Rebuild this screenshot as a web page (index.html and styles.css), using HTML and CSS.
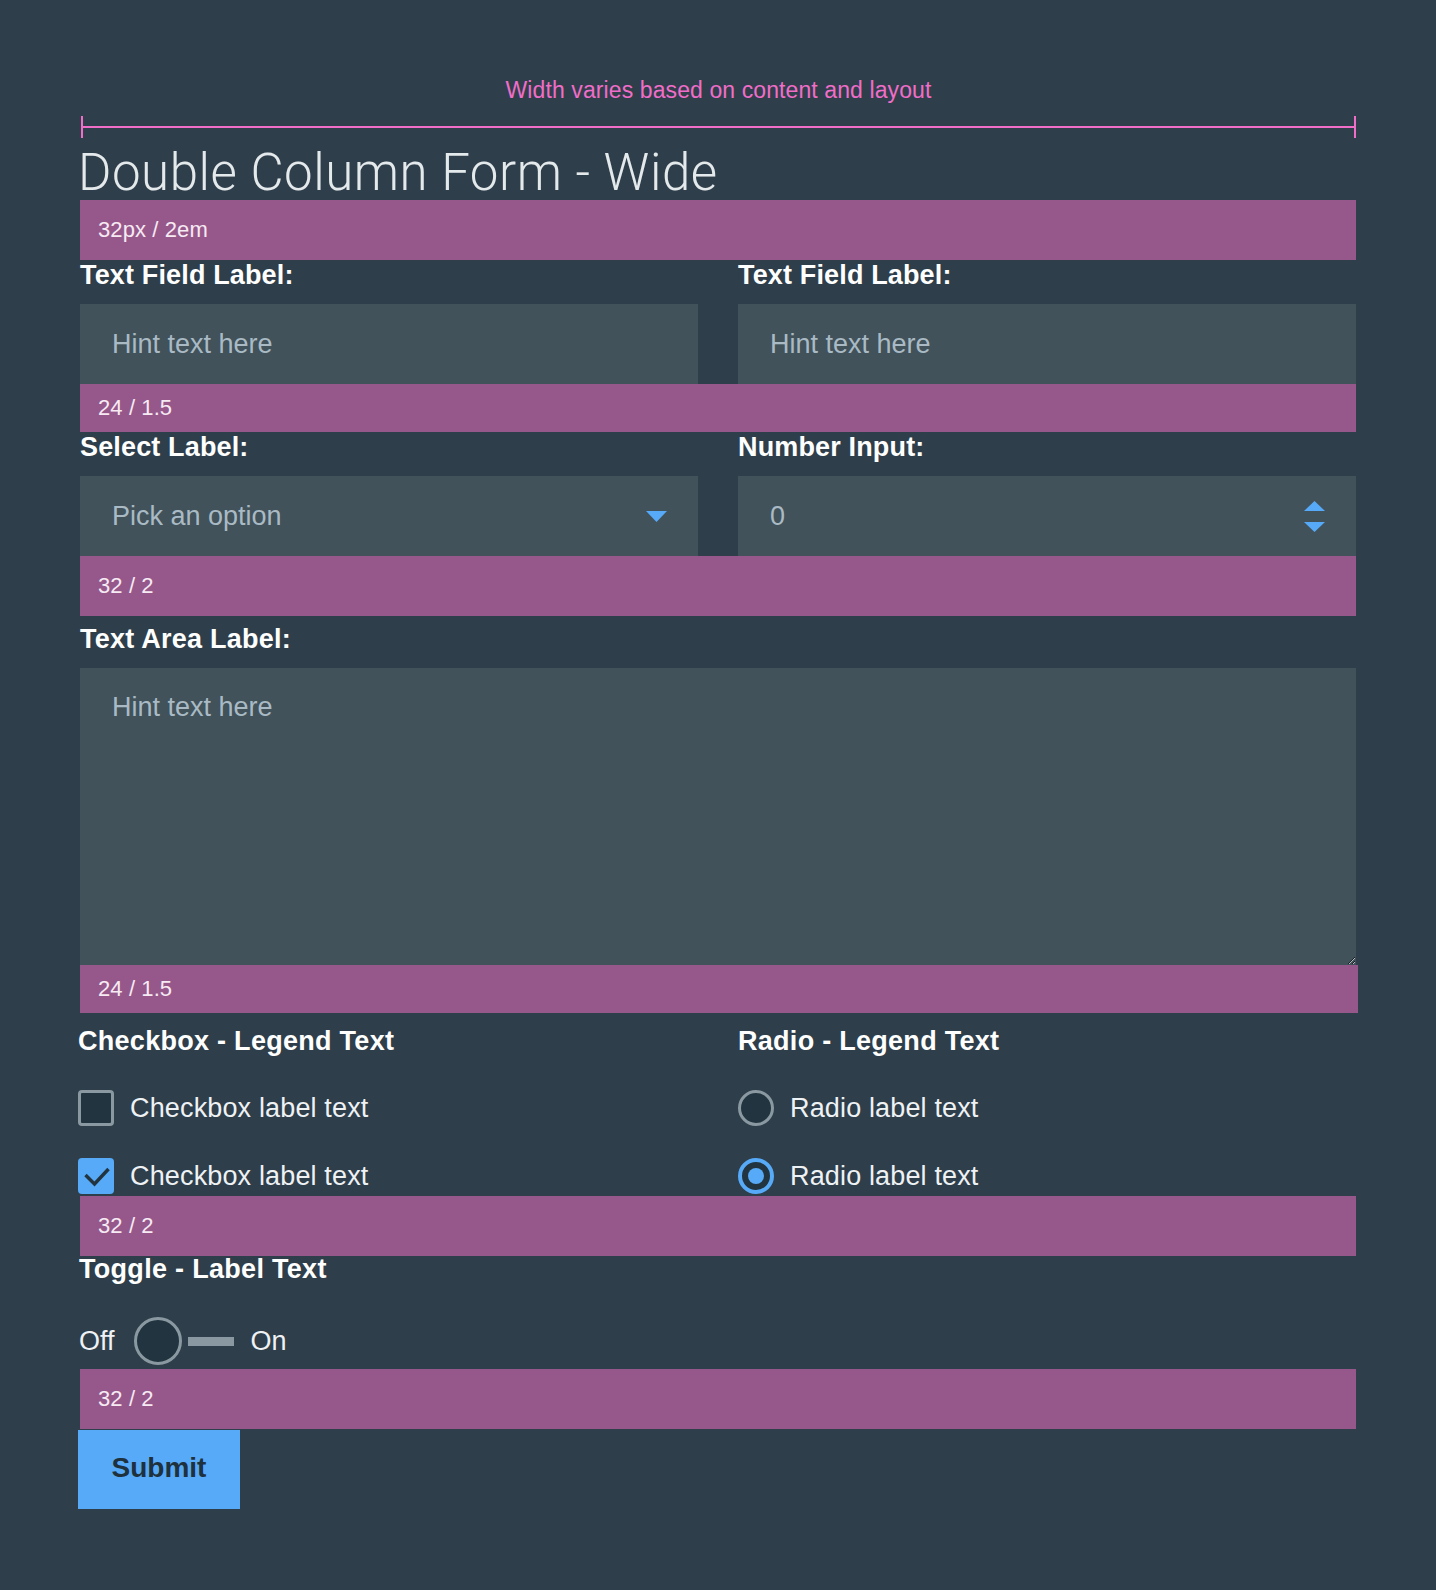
FILE: index.html
```html
<!DOCTYPE html>
<html lang="en">
<head>
<meta charset="utf-8">
<title>Double Column Form - Wide</title>
<link rel="stylesheet" href="styles.css">
</head>
<body>
<main class="page">
  <p class="caption">Width varies based on content and layout</p>
  <div class="ruler"><span class="tick"></span><span class="line"></span><span class="tick"></span></div>
  <h1 class="title">Double Column Form - Wide</h1>
  <div class="band band-tall">32px / 2em</div>

  <div class="row">
    <div class="field">
      <label class="label" for="t1">Text Field Label:</label>
      <input class="input" id="t1" type="text" placeholder="Hint text here">
    </div>
    <div class="field">
      <label class="label" for="t2">Text Field Label:</label>
      <input class="input" id="t2" type="text" placeholder="Hint text here">
    </div>
  </div>
  <div class="band band-short">24 / 1.5</div>

  <div class="row">
    <div class="field">
      <span class="label">Select Label:</span>
      <div class="control select">
        <span class="hint">Pick an option</span>
        <svg class="caret" width="21" height="11" viewBox="0 0 21 11"><polygon points="0,0 21,0 10.5,11" fill="#57aaf8"/></svg>
      </div>
    </div>
    <div class="field">
      <span class="label">Number Input:</span>
      <div class="control number">
        <span class="hint">0</span>
        <svg class="spin" width="21" height="31" viewBox="0 0 21 31"><polygon points="10.5,0 21,10 0,10" fill="#57aaf8"/><polygon points="0,21 21,21 10.5,31" fill="#57aaf8"/></svg>
      </div>
    </div>
  </div>
  <div class="band band-tall">32 / 2</div>

  <label class="label label-area" for="ta">Text Area Label:</label>
  <textarea class="textarea" id="ta" placeholder="Hint text here"></textarea>
  <div class="band band-short band-wide">24 / 1.5</div>

  <div class="row choices">
    <div class="group group-check" role="group">
      <p class="legend">Checkbox - Legend Text</p>
      <div class="option"><span class="box"></span><span class="opt-text">Checkbox label text</span></div>
      <div class="option"><span class="box box-on"><svg width="35" height="35" viewBox="0 0 35 35"><polyline points="6.5,16 15.5,25 29.5,10" fill="none" stroke="#22343f" stroke-width="3.4"/></svg></span><span class="opt-text">Checkbox label text</span></div>
    </div>
    <div class="group" role="radiogroup">
      <p class="legend">Radio - Legend Text</p>
      <div class="option"><span class="radio"></span><span class="opt-text">Radio label text</span></div>
      <div class="option"><span class="radio radio-on"><span class="dot"></span></span><span class="opt-text">Radio label text</span></div>
    </div>
  </div>
  <div class="band band-tall">32 / 2</div>

  <div class="toggle-group">
    <p class="legend legend-toggle">Toggle - Label Text</p>
    <div class="toggle">
      <span class="toggle-text">Off</span>
      <span class="knob"></span>
      <span class="track"></span>
      <span class="toggle-text toggle-on">On</span>
    </div>
  </div>
  <div class="band band-tall">32 / 2</div>

  <button class="submit" type="button">Submit</button>
</main>
</body>
</html>
```

FILE: styles.css
```css
* { box-sizing: border-box; }

html, body {
  margin: 0;
  padding: 0;
  background: #2e3e4a;
}

body {
  font-family: "Liberation Sans", Arial, sans-serif;
  color: #ffffff;
}

.page {
  padding: 76px 80px 81px 80px;
  min-height: 1590px;
}

.caption {
  margin: 0;
  font-size: 23px;
  line-height: 28px;
  letter-spacing: 0.1px;
  color: #f06dc8;
  text-align: center;
  padding-left: 1px;
}

.ruler {
  display: flex;
  align-items: center;
  height: 22px;
  margin-top: 12px;
  padding-left: 1px;
}

.tick {
  width: 2px;
  height: 22px;
  background: #f06dc8;
}

.line {
  flex: 1;
  height: 2px;
  background: #f06dc8;
}

.title {
  margin: 6px 0 -1px -2px;
  font-family: Roboto, "Liberation Sans", sans-serif;
  font-weight: 300;
  font-size: 51px;
  line-height: 57px;
  color: #e4e9ec;
  letter-spacing: 0.55px;
}

.band {
  display: flex;
  align-items: center;
  padding-left: 18px;
  background: #96588b;
  color: #f6eaf3;
  font-size: 22px;
  letter-spacing: 0.1px;
}

.band-tall { height: 60px; }
.band-short { height: 48px; }
.band-wide { margin-right: -2px; }

.row {
  display: grid;
  grid-template-columns: 1fr 1fr;
  column-gap: 40px;
}

.field {
  display: flex;
  flex-direction: column;
}

.label {
  display: block;
  margin: 0 0 13px 0;
  font-weight: bold;
  font-size: 27px;
  line-height: 31px;
  letter-spacing: 0.15px;
  color: #ffffff;
}

.label-area {
  margin-top: 8px;
  letter-spacing: 0.25px;
}

.input,
.control,
.textarea {
  display: block;
  width: 100%;
  border: 0;
  margin: 0;
  background: #41525b;
  font-family: "Liberation Sans", Arial, sans-serif;
  font-size: 27px;
  color: #a9bac4;
  outline: none;
}

.input {
  height: 80px;
  padding: 0 32px;
}

.input::placeholder,
.textarea::placeholder {
  color: #a9bac4;
  opacity: 1;
}

.control {
  height: 80px;
  display: flex;
  align-items: center;
  justify-content: space-between;
  padding: 0 31px 0 32px;
}

.hint { color: #a9bac4; }

.caret, .spin { display: block; }

.textarea {
  height: 297px;
  padding: 19px 32px 15px;
  line-height: 40px;
  resize: both;
}

.choices {
  margin-top: 13px;
  margin-bottom: 2px;
}

.group-check {
  margin-left: -2px;
}

.legend {
  margin: 0;
  font-weight: bold;
  font-size: 27px;
  line-height: 31px;
  letter-spacing: 0.28px;
  color: #ffffff;
}

.option {
  display: flex;
  align-items: center;
  height: 36px;
  margin-top: 32px;
}

.legend + .option {
  margin-top: 33px;
}

.opt-text {
  margin-left: 16px;
  font-size: 27px;
  letter-spacing: 0.15px;
  color: #eef2f5;
}

.box {
  width: 36px;
  height: 36px;
  border: 3px solid #8a99a1;
  border-radius: 4px;
  background: #22343f;
  display: flex;
  align-items: center;
  justify-content: center;
}

.box-on {
  border: 0;
  background: #57aaf8;
}

.box svg { display: block; }

.radio {
  width: 36px;
  height: 36px;
  border: 3px solid #8a99a1;
  border-radius: 50%;
  background: #22343f;
  display: flex;
  align-items: center;
  justify-content: center;
}

.radio-on {
  border: 4px solid #57aaf8;
}

.dot {
  width: 16px;
  height: 16px;
  border-radius: 50%;
  background: #57aaf8;
}

.legend-toggle {
  line-height: 27px;
  margin-left: -1px;
  letter-spacing: 0.3px;
}

.toggle {
  display: flex;
  align-items: center;
  height: 48px;
  margin-top: 34px;
  margin-bottom: 4px;
  margin-left: -1px;
}

.toggle-text {
  font-size: 27px;
  color: #eef2f5;
}

.knob {
  width: 48px;
  height: 48px;
  margin-left: 19px;
  border: 3px solid #8a99a1;
  border-radius: 50%;
  background: #22343f;
}

.track {
  width: 46px;
  height: 9px;
  margin-left: 6px;
  background: #8a99a1;
}

.toggle-on {
  margin-left: 17px;
}

.submit {
  display: block;
  width: 162px;
  height: 79px;
  margin: 1px 0 0 -2px;
  padding: 0 0 4px 0;
  border: 0;
  background: #57aaf8;
  font-family: "Liberation Sans", Arial, sans-serif;
  font-weight: bold;
  font-size: 28px;
  color: #1e313d;
  cursor: pointer;
}
```
